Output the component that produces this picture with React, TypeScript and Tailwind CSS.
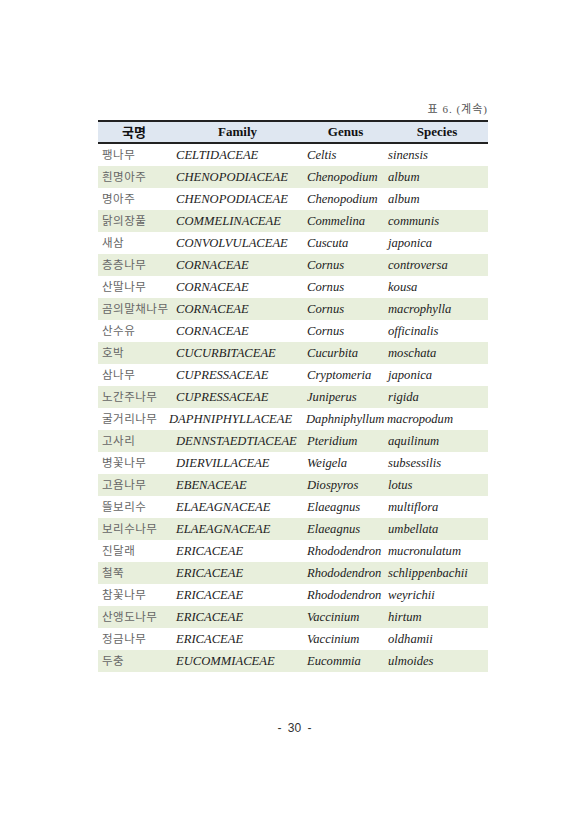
const rows: [string, string, string, string][] = [
  ["팽나무", "CELTIDACEAE", "Celtis", "sinensis"],
  ["흰명아주", "CHENOPODIACEAE", "Chenopodium", "album"],
  ["명아주", "CHENOPODIACEAE", "Chenopodium", "album"],
  ["닭의장풀", "COMMELINACEAE", "Commelina", "communis"],
  ["새삼", "CONVOLVULACEAE", "Cuscuta", "japonica"],
  ["층층나무", "CORNACEAE", "Cornus", "controversa"],
  ["산딸나무", "CORNACEAE", "Cornus", "kousa"],
  ["곰의말채나무", "CORNACEAE", "Cornus", "macrophylla"],
  ["산수유", "CORNACEAE", "Cornus", "officinalis"],
  ["호박", "CUCURBITACEAE", "Cucurbita", "moschata"],
  ["삼나무", "CUPRESSACEAE", "Cryptomeria", "japonica"],
  ["노간주나무", "CUPRESSACEAE", "Juniperus", "rigida"],
  ["굴거리나무", "DAPHNIPHYLLACEAE", "Daphniphyllum", "macropodum"],
  ["고사리", "DENNSTAEDTIACEAE", "Pteridium", "aquilinum"],
  ["병꽃나무", "DIERVILLACEAE", "Weigela", "subsessilis"],
  ["고욤나무", "EBENACEAE", "Diospyros", "lotus"],
  ["뜰보리수", "ELAEAGNACEAE", "Elaeagnus", "multiflora"],
  ["보리수나무", "ELAEAGNACEAE", "Elaeagnus", "umbellata"],
  ["진달래", "ERICACEAE", "Rhododendron", "mucronulatum"],
  ["철쭉", "ERICACEAE", "Rhododendron", "schlippenbachii"],
  ["참꽃나무", "ERICACEAE", "Rhododendron", "weyrichii"],
  ["산앵도나무", "ERICACEAE", "Vaccinium", "hirtum"],
  ["정금나무", "ERICACEAE", "Vaccinium", "oldhamii"],
  ["두충", "EUCOMMIACEAE", "Eucommia", "ulmoides"],
];

const serif = "font-['Liberation_Serif','Noto_Sans_CJK_KR',serif]";
const kr = "font-['Noto_Sans_CJK_KR',sans-serif]";

export default function App() {
  return (
    <div className="w-[587px] h-[830px] bg-white flex flex-col">
      <div className="ml-[98px] w-[390px] pt-[101px]">
        <div className={`h-[19px] text-right text-[11px] text-[#555] tracking-[1px] ${serif}`}>
          표 6. (계속)
        </div>
        <div className="border-t-2 border-b-2 border-[#222] bg-[#dfe7f1] h-[24px] flex items-center text-[13px] font-bold text-[#111]">
          <div className={`w-[72px] text-center ${kr}`}>국명</div>
          <div className={`w-[135px] text-center ${serif}`}>Family</div>
          <div className={`w-[81px] text-center ${serif}`}>Genus</div>
          <div className={`w-[102px] text-center ${serif}`}>Species</div>
        </div>
        {rows.map(([name, family, genus, species], i) => (
          <div
            key={i}
            className={`h-[22px] flex items-center whitespace-nowrap ${i % 2 === 1 ? "bg-[#e8efdc]" : "bg-white"}`}
          >
            <div className={`w-[72px] pl-[4px] text-[11.5px] text-[#666] tracking-[0.5px] ${kr}`}>{name}</div>
            <div className={`w-[135px] text-[12.6px] leading-[16px] italic text-[#222] ${serif} ${name === "굴거리나무" ? "-ml-[1px]" : "pl-[6px]"}`}>
              {family}
            </div>
            <div className={`w-[81px] pl-[2px] text-[12.6px] leading-[16px] italic text-[#222] ${serif}`}>{genus}</div>
            <div className={`w-[102px] pl-[2px] text-[12.6px] leading-[16px] italic text-[#222] ${serif}`}>{species}</div>
          </div>
        ))}
      </div>
      <div className="mt-[47px] text-center text-[12px] text-[#333] font-['Liberation_Sans',sans-serif] pl-[2px] [word-spacing:3px]">
        - 30 -
      </div>
    </div>
  );
}
